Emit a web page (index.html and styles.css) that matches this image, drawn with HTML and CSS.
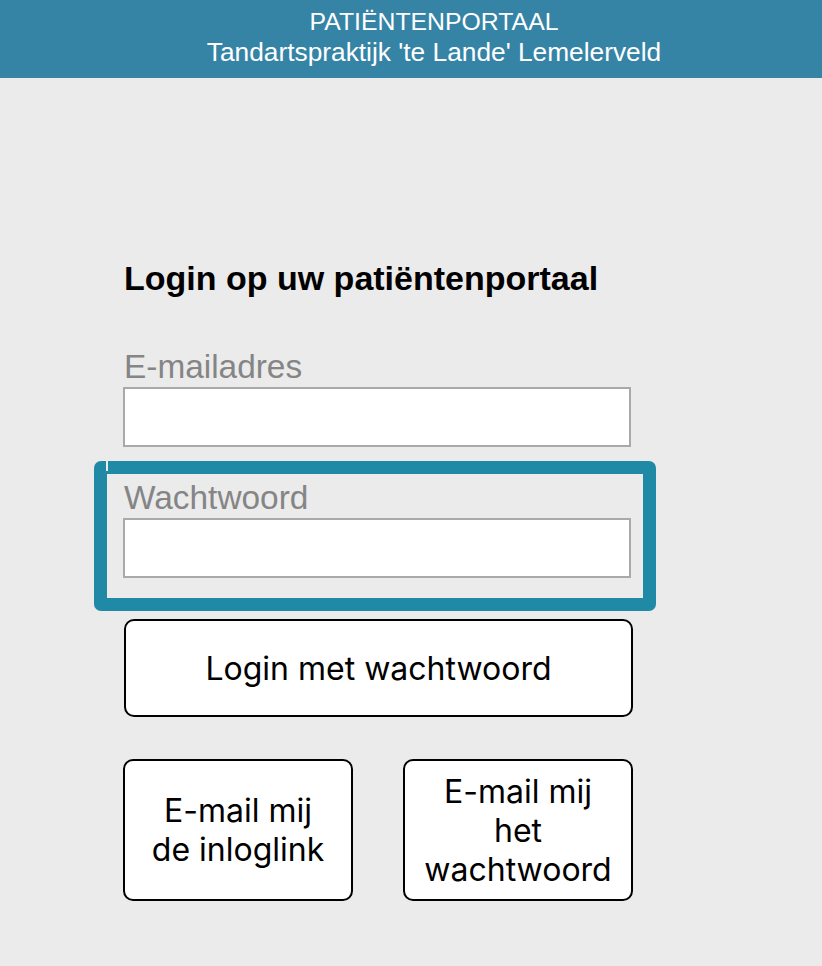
FILE: index.html
```html
<!DOCTYPE html>
<html lang="nl">
<head>
    <meta charset="UTF-8">
    <meta name="viewport" content="width=device-width, initial-scale=1.0">
    <title>Patiëntenportaal</title>
    <link rel="stylesheet" href="styles.css">
</head>
<body>
    <div class="header">
        <div class="header-title">PATIËNTENPORTAAL</div>
        <div class="header-sub">Tandartspraktijk 'te Lande' Lemelerveld</div>
    </div>
    <div class="container">
        <h1>Login op uw patiëntenportaal</h1>
        <div class="field">
            <label for="email">E-mailadres</label>
            <input type="text" id="email">
        </div>
        <div class="field focused">
            <label for="password">Wachtwoord</label>
            <input type="password" id="password">
        </div>
        <button class="btn btn-login">Login met wachtwoord</button>
        <div class="btn-row">
            <button class="btn btn-small">E-mail mij<br>de inloglink</button>
            <button class="btn btn-small">E-mail mij<br>het<br>wachtwoord</button>
        </div>
    </div>
</body>
</html>
```

FILE: styles.css
```css
body {
    margin: 0;
    background-color: #ebebeb;
    font-family: "Liberation Sans", Arial, sans-serif;
}

.header {
    background-color: #3584a6;
    color: white;
    text-align: center;
    line-height: 30px;
    padding: 7px 0 11px 46px;
}

.header-title {
    font-size: 24.8px;
}

.header-sub {
    font-size: 26.3px;
}

.container {
    width: 510px;
    padding-left: 123px;
    padding-top: 180px;
}

h1 {
    font-size: 34px;
    line-height: 40px;
    margin: 0 0 50px 1px;
}

.field label {
    display: block;
    color: #858585;
    font-size: 33.4px;
    line-height: 38px;
    margin-left: 1px;
}

.field input {
    display: block;
    box-sizing: border-box;
    width: 508px;
    height: 60px;
    margin-top: 1px;
    border: 2px solid #a9a9a9;
    background: white;
    outline: none;
}

.focused {
    position: relative;
    border: 13px solid #2089a5;
    border-radius: 7px;
    margin: 14px -23px 8px -29px;
    padding: 5px 12px 20px 16px;
}

.focused::before {
    content: "";
    position: absolute;
    left: -1px;
    top: -13px;
    width: 2px;
    height: 10px;
    background-color: #ebebeb;
}

.btn {
    display: block;
    box-sizing: border-box;
    background: white;
    color: black;
    border: 2px solid black;
    border-radius: 10px;
    font-family: Inter, "Noto Sans", sans-serif;
    font-size: 32px;
    line-height: 39px;
    cursor: pointer;
}

.btn-login {
    width: 509px;
    height: 98px;
    margin-left: 1px;
}

.btn-row {
    display: flex;
    gap: 50px;
    margin-top: 42px;
}

.btn-small {
    flex-shrink: 0;
    width: 230px;
    height: 142px;
    padding: 0;
}
```
